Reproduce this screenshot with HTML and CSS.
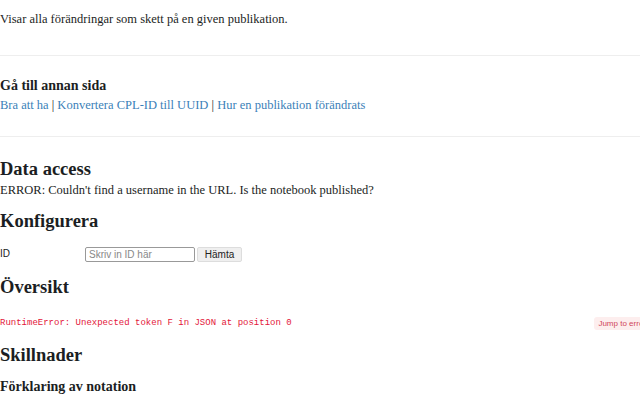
FILE: index.html
```html
<!DOCTYPE html>
<html lang="sv">
<head>
<meta charset="UTF-8" />
<meta name="viewport" content="width=device-width, initial-scale=1" />
<title>Hur en publikation förändrats</title>
<link rel="stylesheet" href="styles.css">
</head>
<body>

<div class="cell">
  <p class="lead">Visar alla förändringar som skett på en given publikation.</p>
</div>

<hr>

<div class="cell nav">
  <h3>Gå till annan sida</h3>
  <p><a href="#">Bra att ha</a> | <a href="#">Konvertera CPL-ID till UUID</a> | <a href="#">Hur en publikation förändrats</a></p>
</div>

<hr>

<div class="cell access">
  <h2>Data access</h2>
  <p>ERROR: Couldn't find a username in the URL. Is the notebook published?</p>
</div>

<div class="cell config">
  <h2>Konfigurera</h2>
</div>

<form class="cell idform">
  <label for="pubId">ID</label>
  <input type="text" id="pubId" placeholder="Skriv in ID här" />
  <button type="button">Hämta</button>
</form>

<div class="cell overview">
  <h2>Översikt</h2>
</div>

<div class="cell error">
  <span>RuntimeError: Unexpected token F in JSON at position 0</span>
  <a class="jump" href="#">Jump to error</a>
</div>

<div class="cell diffs">
  <h2>Skillnader</h2>
</div>

<div class="cell notation">
  <h3>Förklaring av notation</h3>
</div>

</body>
</html>
```

FILE: styles.css
```css
body {
  margin: 0;
  font-family: "Liberation Serif", serif;
  font-size: 12.5px;
  line-height: 1.4;
  color: #1b1e23;
  background: #fff;
  overflow: hidden;
}
p {
  margin: 0;
}
.lead {
  margin-top: 11px;
}
hr {
  border: none;
  border-top: 1px solid #eee;
  margin: 26px 0 0;
}
.nav {
  margin-top: 22px;
}
.nav p {
  margin-top: 3px;
}
.nav + hr {
  margin-top: 21px;
}
h3 {
  font-size: 14px;
  font-weight: 700;
  margin: 0;
  line-height: 1.2;
}
h2 {
  font-size: 18.5px;
  font-weight: 700;
  margin: 0;
  line-height: 1.2;
}
a {
  color: #3b7fb8;
  text-decoration: none;
}
.access {
  margin-top: 21px;
}
.access p {
  margin-top: 2px;
}
.config {
  margin-top: 11px;
}
.idform {
  display: flex;
  align-items: center;
  margin-top: 14px;
  font-family: "Liberation Sans", sans-serif;
  font-size: 10px;
}
.idform label {
  width: 85px;
}
.idform input {
  box-sizing: border-box;
  width: 110px;
  height: 15px;
  padding: 0 3px;
  border: 1px solid #999;
  border-radius: 2px;
  font-family: "Liberation Sans", sans-serif;
  font-size: 10px;
}
.idform input::placeholder {
  color: #888;
}
.idform button {
  box-sizing: border-box;
  margin-left: 2px;
  width: 45px;
  height: 15px;
  padding: 0;
  border: 1px solid #ddd;
  border-radius: 2px;
  background: #efefef;
  font-family: "Liberation Sans", sans-serif;
  font-size: 10px;
  color: #222;
}
.overview {
  margin-top: 14px;
}
.error {
  display: flex;
  justify-content: space-between;
  align-items: center;
  margin-top: 19px;
  font-family: "Liberation Mono", monospace;
  font-size: 9px;
  color: #e3163a;
}
.jump {
  margin-right: -10px;
  padding: 1px 4px;
  border-radius: 3px;
  background: #fdeeee;
  color: #d0465a;
  font-family: "Liberation Sans", sans-serif;
  font-size: 8px;
  line-height: 1.4;
}
.diffs {
  margin-top: 14px;
}
.notation {
  margin-top: 13px;
}
```
